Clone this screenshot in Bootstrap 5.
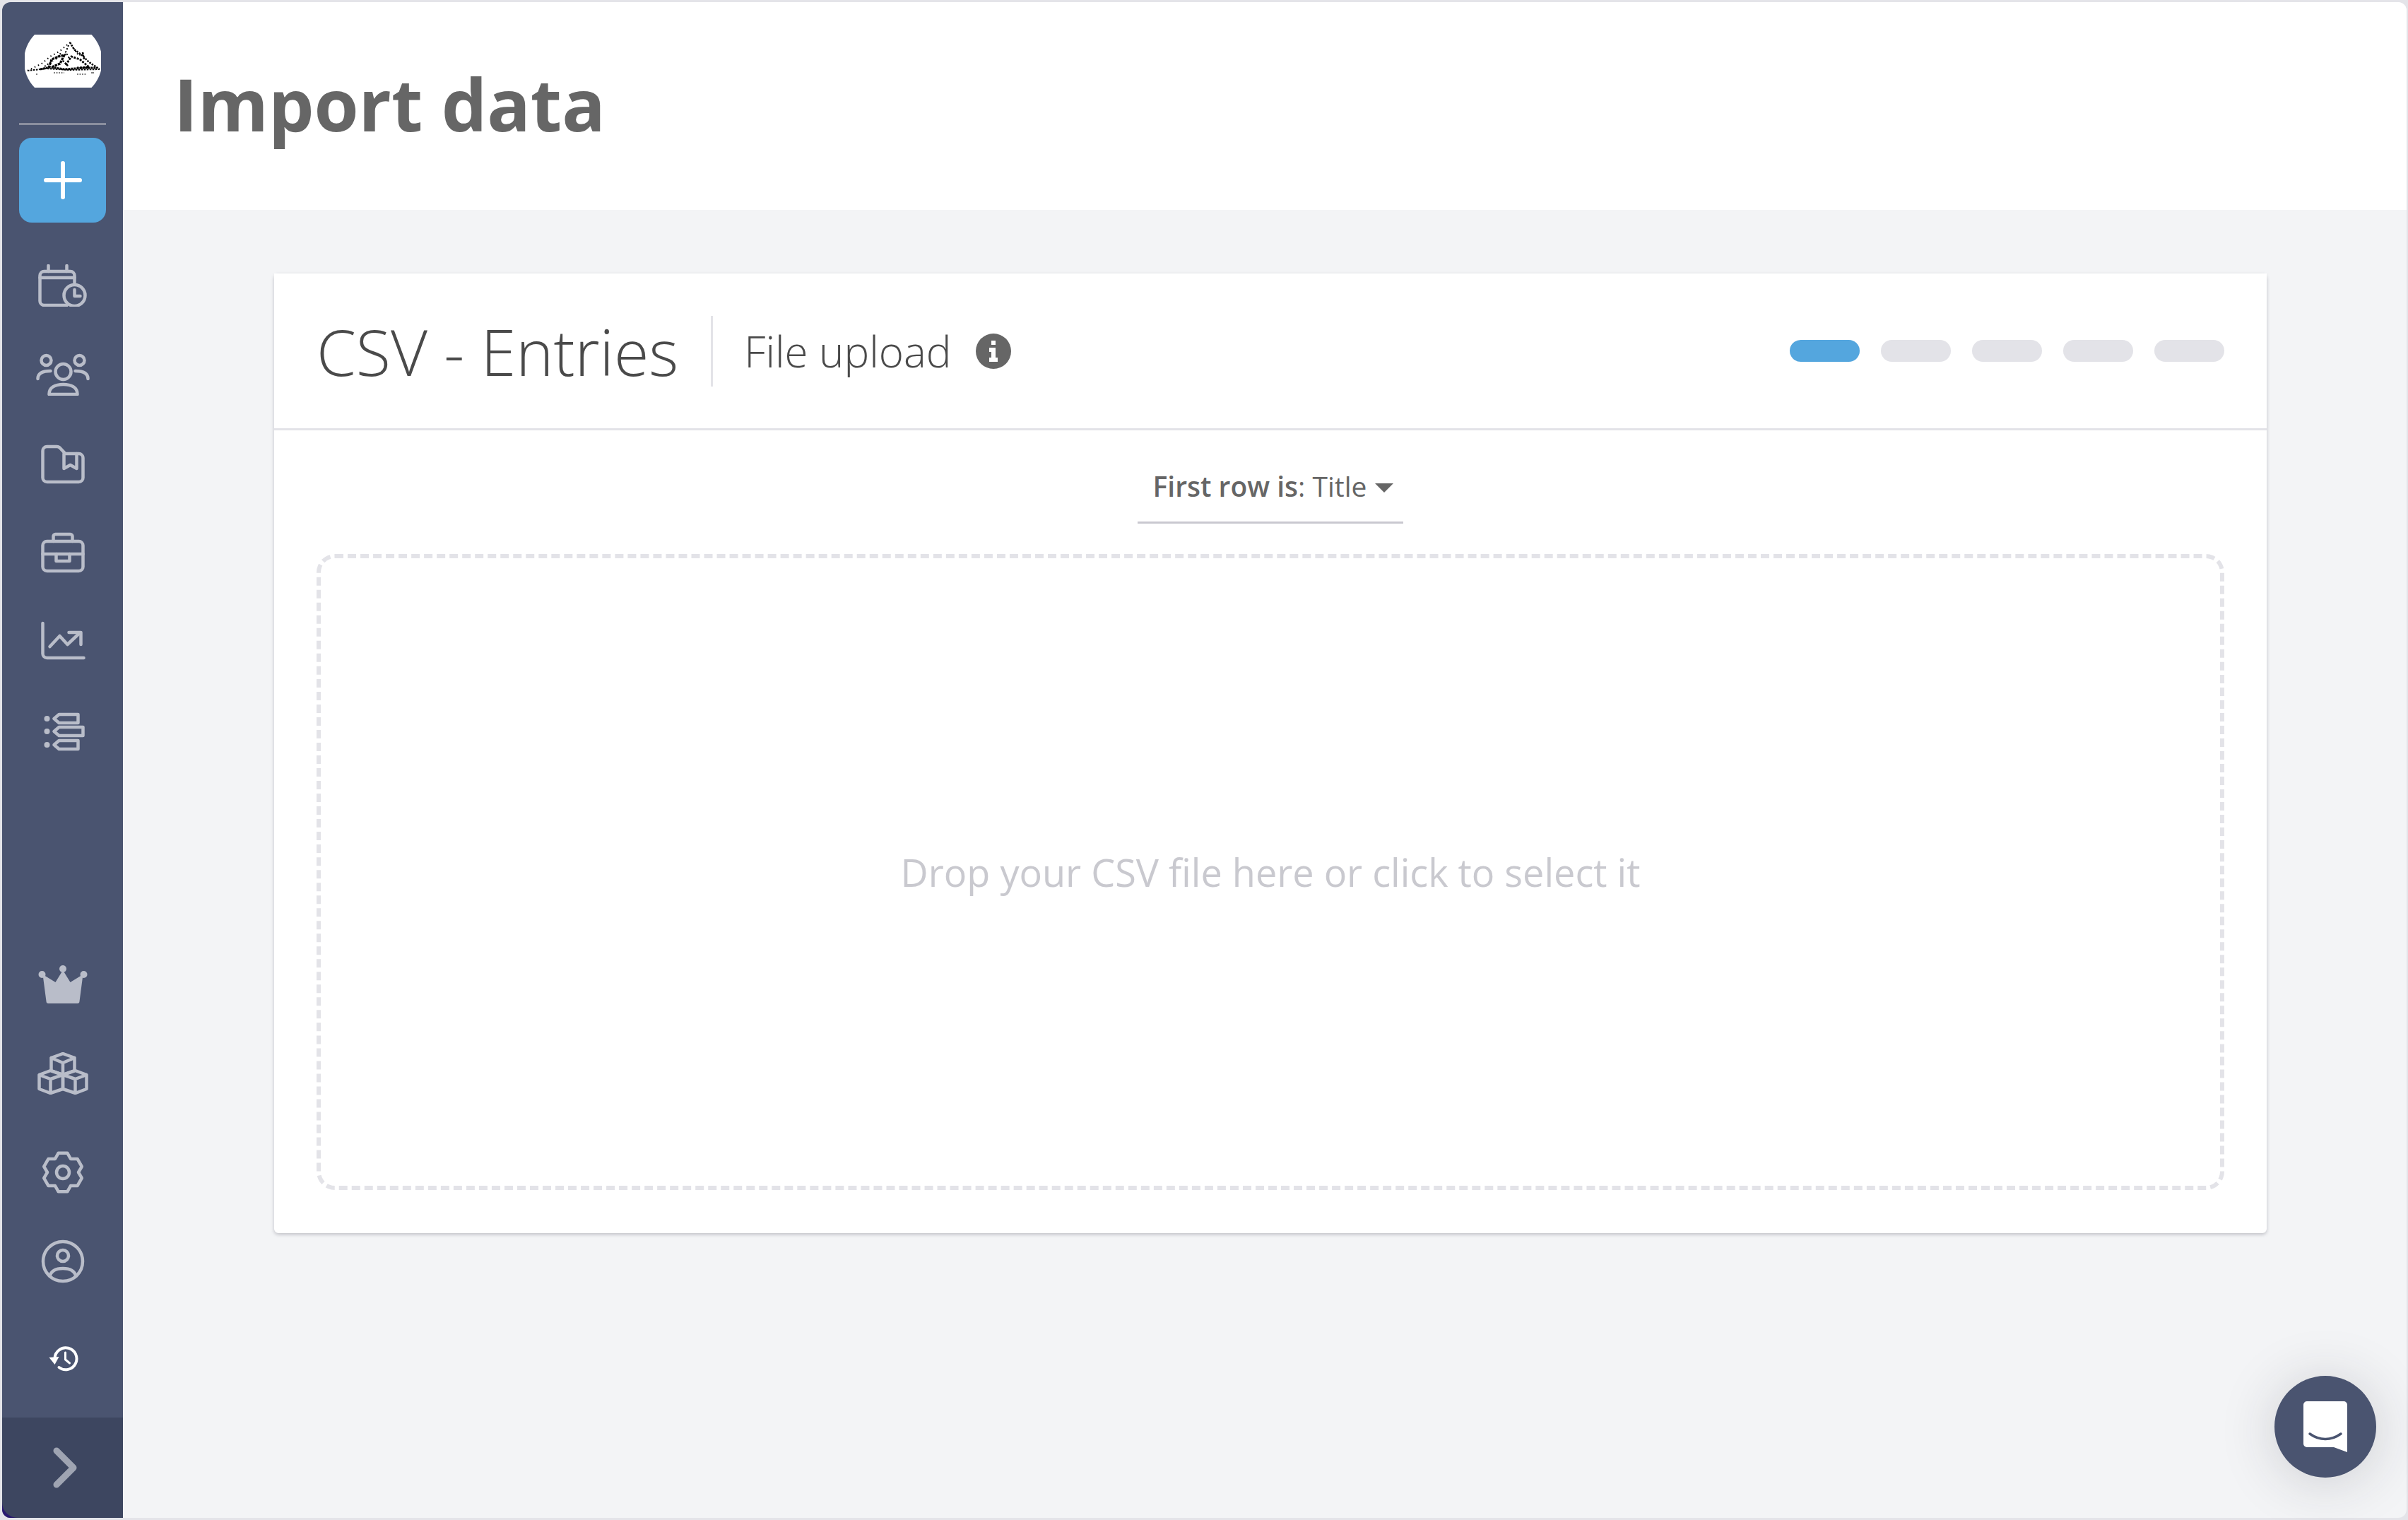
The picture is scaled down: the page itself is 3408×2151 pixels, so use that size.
<!DOCTYPE html>
<html lang="en">
<head>
<meta charset="utf-8">
<title>Import data</title>
<link rel="stylesheet" href="https://cdn.jsdelivr.net/npm/bootstrap@5.3.0/dist/css/bootstrap.min.css">
<style>
html,body{height:100%;}
body{background:#e4e4e9;padding:3px 2px 3px 3px;overflow:hidden;font-family:"Open Sans","Liberation Sans",sans-serif;color:#666;}
.app-frame{height:100%;border-radius:12px;overflow:hidden;background:#f3f4f6;}
.side-rail{width:171px;flex:0 0 171px;background:#4a5470;}
.logo-wrap{padding-top:46px;height:171px;}
.rail-sep{height:3px;background:#8a8f9f;margin:0 24px 18px;}
.add-btn{width:123px;height:120px;margin:0 24px;background:#54a6de;border-radius:18px;border:0;padding:0;}
.add-btn:hover{background:#54a6de;}
.top-nav{margin-top:26px;}
.bottom-nav{margin-bottom:21px;}
.nav-slot{height:126px;}
.nav-slot-far{margin-top:14px;}
.nav-slot-near{margin-top:11px;}
.rail-ico{fill:none;stroke:#b9bdc9;stroke-width:4.500;stroke-linecap:round;stroke-linejoin:round;}
.rail-corner{background:#2a1a70;}
.rail-foot{height:142px;background:#3d4660;border-bottom-left-radius:22px;}
.foot-chevron{margin-left:7px;}
.page-head{height:294px;background:#fff;padding:0 0 6px 72px;}
.page-title{font-size:102px;font-weight:700;color:#666;margin:0;line-height:1;}
.csv-panel{margin:90px 0 0 214px;width:2820px;height:1358px;border:0;border-radius:6px;box-shadow:0 2px 5px rgba(60,60,80,.28);}
.csv-head{height:222px;padding:0 60px;border-bottom:3px solid #e3e3e8;background:#fff;}
.csv-title{font-size:90px;font-weight:300;color:#4a4a4a;margin:0;line-height:1;}
.csv-vr{width:3px;height:100px;background:#e3e3e8;margin:0 44px 0 46px;}
.csv-sub{font-size:60px;font-weight:300;color:#4a4a4a;line-height:1;}
.info-dot{margin-left:35px;}
.step-row{gap:30px;}
.step-pill{width:99px;height:31px;border-radius:16px;background:#e3e3e8;}
.step-on{background:#54a6de;}
.csv-body{padding:0 60px 60px;}
.row-picker{height:132px;}
.row-toggle{width:376px;height:96px;margin-top:36px;background:none;border:0;border-bottom:3px solid #c9c8d0;border-radius:0;color:#666;font-size:39px;padding:0 0 6px 8px;}
.row-toggle::after{border-top-width:13px;border-left-width:13px;border-right-width:13px;margin-left:12px;vertical-align:6px;}
.row-toggle:hover,.row-toggle:active,.row-toggle.show{color:#666;border-bottom-color:#c9c8d0!important;background:none!important;}
.row-toggle b{font-weight:600;}
.drop-zone{height:900px;margin-top:43px;border:6px dashed #e3e3e8;border-radius:26px;}
.drop-text{font-size:54px;color:#c9c9cf;}
.chat-btn{position:fixed;left:3219px;top:1947px;width:144px;height:144px;border-radius:50%;background:#4a5470;box-shadow:0 6px 80px rgba(40,40,50,.18);}
</style>
</head>
<body>
<div class="app-frame d-flex">
  <aside class="side-rail d-flex flex-column">
    <div class="logo-wrap d-flex justify-content-center">
      <svg width="108" height="75" viewBox="34 49 108 75" role="img" aria-label="Logo">
        <path d="M48 49H128.500A54 54 0 0 1 128.500 124H48A54 54 0 0 1 48 49Z" fill="#fff"/>
        <g fill="none" stroke="#000" stroke-width="2">
          <path d="M38 100L65 97L98 99L140 98" stroke-dasharray="2.500 1.500"/>
          <path d="M56 98L70 95L90 98L120 96L136 96" stroke-width="3" stroke-dasharray="3 1"/>
          <path d="M38 100L58 90L70 80L84 72L98 60" stroke-dasharray="1.500 4"/>
          <path d="M98 60L104 70L115 78L125 88L140 98" stroke-width="2.500" stroke-dasharray="2.500 1.500"/>
          <path d="M68 96L72 84L82 80L90 78L84 90L72 95" stroke-width="3.200" stroke-dasharray="3.500 1"/>
          <path d="M92 92L100 80L112 84L125 95L108 96" stroke-width="2.800" stroke-dasharray="3 1.500"/>
          <path d="M96 64L92 74L98 84M103 68L110 78L118 76M78 84L86 74M62 94L74 86" stroke-dasharray="2 2.500"/>
          <path d="M116 74L118 84M88 86L96 94" stroke-width="2.500" stroke-dasharray="2 2"/>
          <path d="M108 105H122M75 103H90" stroke-width="1" stroke-dasharray="2 1.500"/>
          <path d="M50 105H52M128 103H132" stroke-width="1"/>
        </g>
      </svg>
    </div>
    <div class="rail-sep"></div>
    <button class="add-btn btn d-flex align-items-center justify-content-center" type="button" aria-label="Add">
      <svg width="54" height="54" viewBox="0 0 54 54"><path d="M27 3V51M3 27H51" fill="none" stroke="#fff" stroke-width="6" stroke-linecap="round"/></svg>
    </button>
    <nav class="top-nav d-flex flex-column">
      <a class="nav-slot d-flex align-items-center justify-content-center" href="#"><svg width="80" height="60" viewBox="48.500 374 80 60" class="rail-ico">
        <path d="M94 432H62a6 6 0 0 1-6-6V390a6 6 0 0 1 6-6H99a6 6 0 0 1 6 6V400"/><path d="M68 376V384M94 376V384M56 393H105"/><circle cx="105" cy="418" r="15"/><path d="M105 410V419H113"/></svg></a>
      <a class="nav-slot d-flex align-items-center justify-content-center" href="#"><svg width="80" height="60" viewBox="48.500 500 80 60" class="rail-ico">
        <circle cx="65" cy="510" r="7"/><circle cx="112" cy="510" r="7"/><circle cx="89" cy="526" r="11"/><path d="M69 558C69 548 78 544 89 544C100 544 109 548 109 558Z"/><path d="M53 536C53 528 60 525 71 525M124 536C124 528 117 525 106 525"/></svg></a>
      <a class="nav-slot d-flex align-items-center justify-content-center" href="#"><svg width="80" height="60" viewBox="48.500 626 80 60" class="rail-ico">
        <path d="M66 632H80a6 6 0 0 1 4 1.500L92 642H111a6 6 0 0 1 6 6V676a6 6 0 0 1-6 6H66a6 6 0 0 1-6-6V638a6 6 0 0 1 6-6Z"/><path d="M90 642V663L99 658L108 663V642"/></svg></a>
      <a class="nav-slot d-flex align-items-center justify-content-center" href="#"><svg width="80" height="60" viewBox="48.500 751 80 60" class="rail-ico">
        <rect x="60" y="765" width="57" height="42" rx="6"/><path d="M60 783H79M98 783H117"/><path d="M79 783V793H98V783H79Z"/><path d="M75 765V758a3 3 0 0 1 3-3H99a3 3 0 0 1 3 3V765"/></svg></a>
      <a class="nav-slot d-flex align-items-center justify-content-center" href="#"><svg width="80" height="60" viewBox="48.500 878 80 60" class="rail-ico">
        <path d="M60 882V925a6 6 0 0 0 6 6H118"/><path d="M70 915L84 900L95 912L112 896"/><path d="M97 895H114V912"/></svg></a>
      <a class="nav-slot d-flex align-items-center justify-content-center" href="#"><svg width="80" height="60" viewBox="48.500 1003 80 60" class="rail-ico">
        <circle cx="66" cy="1016" r="4" fill="#b9bdc9" stroke="none"/><circle cx="66" cy="1034" r="4" fill="#b9bdc9" stroke="none"/><circle cx="66" cy="1053" r="4" fill="#b9bdc9" stroke="none"/>
        <path d="M83 1010H110V1022H83L76 1016Z"/><path d="M83 1028H117V1040H83L76 1034Z"/><path d="M83 1047H110V1059H83L76 1053Z"/></svg></a>
    </nav>
    <nav class="bottom-nav mt-auto d-flex flex-column">
      <a class="nav-slot d-flex align-items-center justify-content-center" href="#"><svg width="80" height="60" viewBox="48.500 1365 80 60">
        <g fill="#b9bdc9"><circle cx="59" cy="1381" r="5"/><circle cx="88.500" cy="1373" r="5"/><circle cx="118" cy="1381" r="5"/><path d="M60 1381L78 1392L88.500 1375L99 1392L117 1381L112 1419Q112 1422 109 1422H68Q65 1422 65 1419Z"/></g></svg></a>
      <a class="nav-slot d-flex align-items-center justify-content-center" href="#"><svg width="80" height="60" viewBox="48.500 1490 80 60" class="rail-ico">
        <path d="M88.500 1492L105 1498V1516L88.500 1522L72 1516V1498Z M72 1498L88.500 1505L105 1498M88.500 1505V1522"/>
        <path d="M71 1516L88.500 1522V1542L71 1548L55 1542V1522Z M55 1522L71 1528L88.500 1522M71 1528V1548"/>
        <path d="M106 1516L122 1522V1542L106 1548L88.500 1542V1522Z M88.500 1522L106 1528L122 1522M106 1528V1548"/></svg></a>
      <a class="nav-slot nav-slot-far d-flex align-items-center justify-content-center" href="#"><svg width="80" height="64" viewBox="-40 -32 80 64" class="rail-ico">
        <path d="M-6.300-27.300L6.300-27.300L11-19L20.500-19.100L26.800-8.200L22 0L26.800 8.200L20.500 19.100L11 19L6.300 27.300L-6.300 27.300L-11 19L-20.500 19.100L-26.800 8.200L-22 0L-26.800-8.200L-20.500-19.100L-11-19Z"/><circle cx="0" cy="0" r="9"/></svg></a>
      <a class="nav-slot d-flex align-items-center justify-content-center" href="#"><svg width="80" height="64" viewBox="48.500 1753 80 64" class="rail-ico">
        <circle cx="88.500" cy="1785" r="28"/><circle cx="88.500" cy="1777" r="8"/><path d="M70 1806C72 1798 80 1795 88.500 1795C97 1795 105 1798 107 1806"/></svg></a>
      <a class="nav-slot nav-slot-near d-flex align-items-center justify-content-center" href="#"><svg width="80" height="60" viewBox="48.500 1892 80 60">
        <g fill="none" stroke="#fff" stroke-width="4" stroke-linecap="round"><path d="M77 1922A15.500 15.500 0 1 1 83 1935"/><path d="M92 1914V1924L98 1929" stroke-width="3"/></g><path d="M69 1921L83 1920L77 1931Z" fill="#fff"/></svg></a>
    </nav>
    <div class="rail-corner">
      <div class="rail-foot d-flex align-items-center justify-content-center">
        <svg class="foot-chevron" width="40" height="62" viewBox="0 0 40 62"><path d="M8 7L32 31L8 55" fill="none" stroke="#9fa4b2" stroke-width="9" stroke-linecap="round" stroke-linejoin="round"/></svg>
      </div>
    </div>
  </aside>
  <main class="flex-grow-1">
    <header class="page-head d-flex align-items-center">
      <h1 class="page-title">Import data</h1>
    </header>
    <section class="csv-panel card">
      <div class="csv-head d-flex align-items-center">
        <h2 class="csv-title">CSV - Entries</h2>
        <div class="csv-vr"></div>
        <span class="csv-sub">File upload</span>
        <svg class="info-dot" width="50" height="50" viewBox="-25 -25 50 50" aria-label="Info">
          <circle r="25" fill="#666"/><path d="M-3-15h6v6h-6ZM-6-5H3V9H6v6H-6V9h3V1H-6Z" fill="#fff"/>
        </svg>
        <div class="step-row ms-auto d-flex">
          <div class="step-pill step-on"></div>
          <div class="step-pill"></div>
          <div class="step-pill"></div>
          <div class="step-pill"></div>
          <div class="step-pill"></div>
        </div>
      </div>
      <div class="csv-body">
        <div class="row-picker d-flex justify-content-center dropdown">
          <button class="row-toggle btn dropdown-toggle" type="button"><b>First row is</b>: Title</button>
        </div>
        <div class="drop-zone d-flex align-items-center justify-content-center">
          <span class="drop-text">Drop your CSV file here or click to select it</span>
        </div>
      </div>
    </section>
  </main>
</div>
<a class="chat-btn d-flex align-items-center justify-content-center" href="#" aria-label="Chat">
  <svg width="64" height="72" viewBox="0 0 64 72">
    <path d="M6 0H58a5 5 0 0 1 5 5V72L44 65H6a5 5 0 0 1-5-5V5A5 5 0 0 1 6 0Z" fill="#fff"/>
    <path d="M10 46C24 56 40 56 54 46" fill="none" stroke="#4a5470" stroke-width="3.500" stroke-linecap="round"/>
  </svg>
</a>
<script src="https://cdn.jsdelivr.net/npm/bootstrap@5.3.0/dist/js/bootstrap.bundle.min.js"></script>
</body>
</html>
